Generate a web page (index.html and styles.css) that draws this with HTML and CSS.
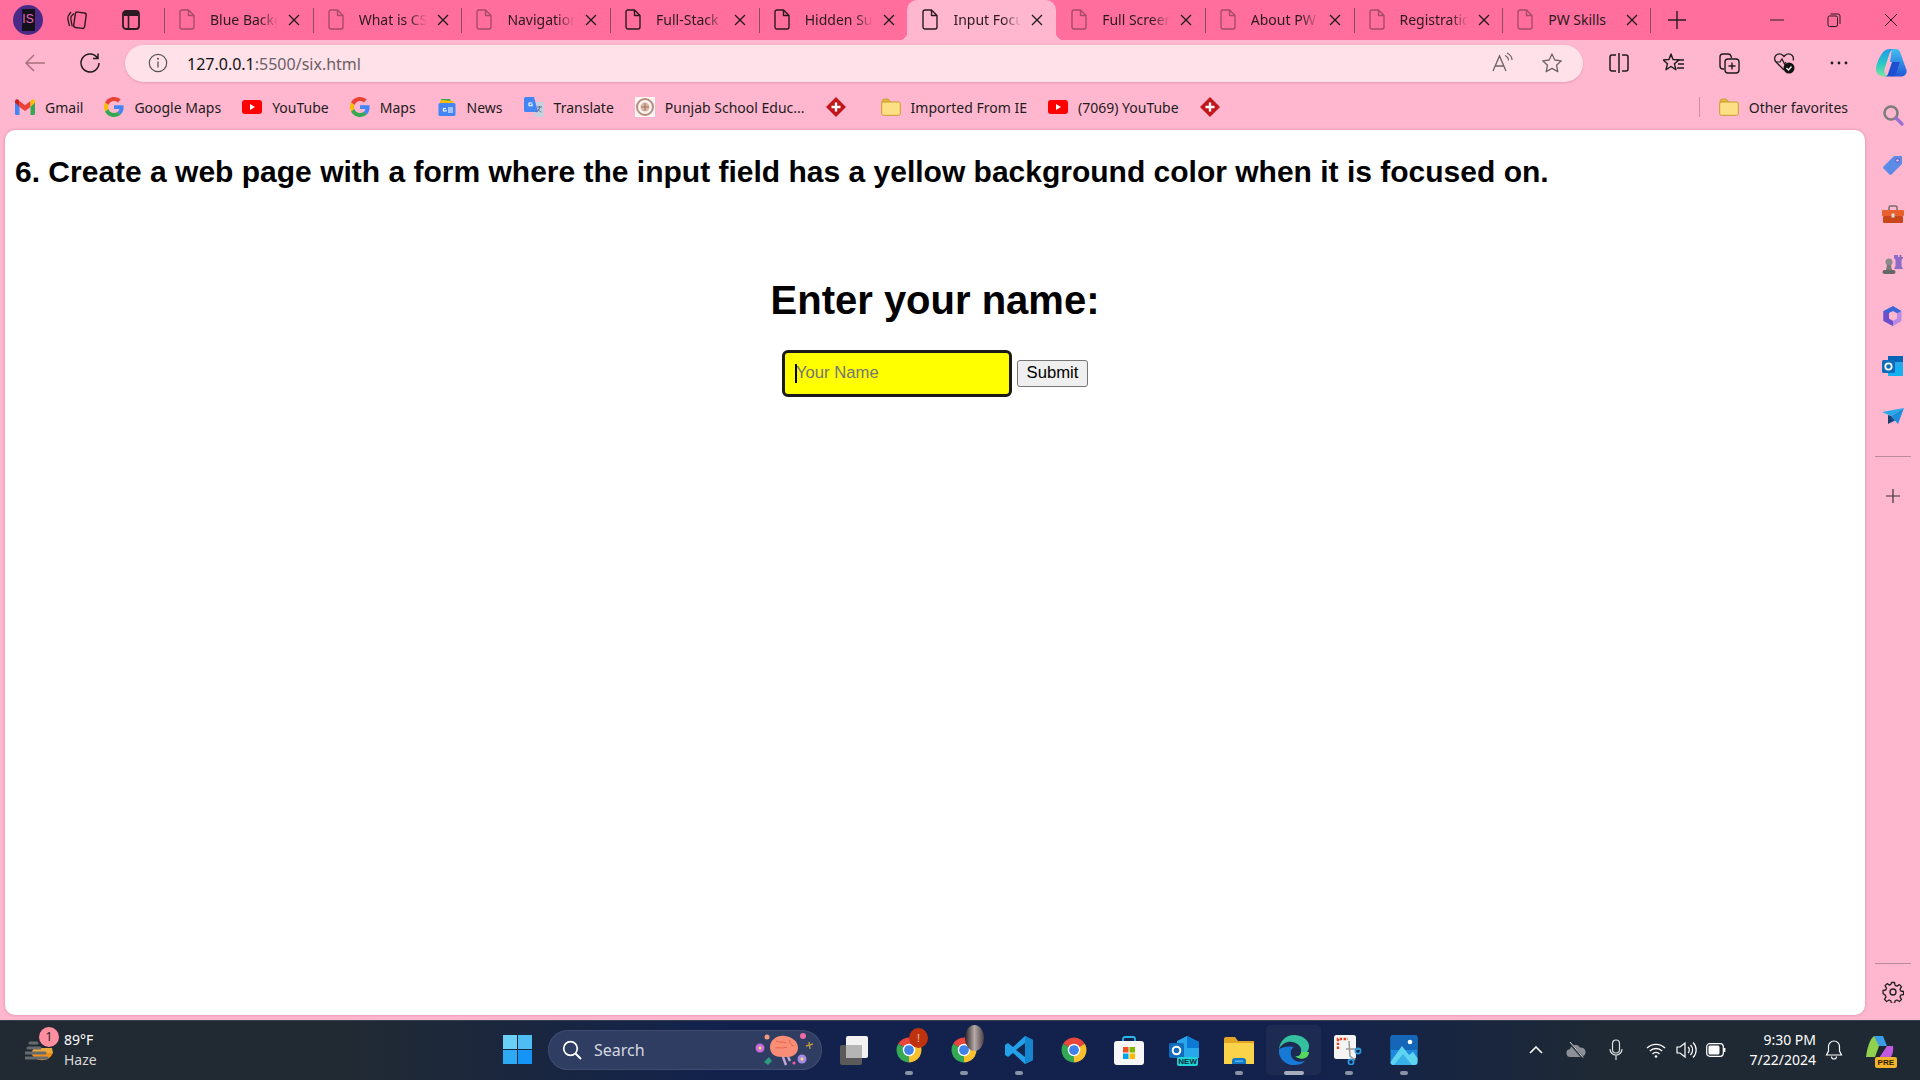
FILE: index.html
```html
<!DOCTYPE html>
<html lang="en">
<head>
  <meta charset="UTF-8">
  <meta name="viewport" content="width=device-width, initial-scale=1.0">
  <title>Input Focus</title>
  <link rel="stylesheet" href="styles.css">
</head>
<body>

<svg class="sprite" xmlns="http://www.w3.org/2000/svg">
  <defs>
    <linearGradient id="cp-left" x1="0" y1="0" x2="0" y2="1"><stop offset="0" stop-color="#1e9be8"/><stop offset="0.55" stop-color="#2cc9c4"/><stop offset="1" stop-color="#7be3a0"/></linearGradient>
    <linearGradient id="cp-right" x1="0" y1="0" x2="0" y2="1"><stop offset="0" stop-color="#3fc0ef"/><stop offset="1" stop-color="#2257d8"/></linearGradient>
  </defs>
  <symbol id="file" viewBox="0 0 16 21"><path d="M3 1h6.5L15 6.5V18a2 2 0 0 1-2 2H3a2 2 0 0 1-2-2V3a2 2 0 0 1 2-2zM9.500 1v5.500H15" fill="none" stroke="currentColor" stroke-width="1.400" stroke-linejoin="round"/></symbol>
  <symbol id="close" viewBox="0 0 12 12"><path d="M1 1l10 10M11 1L1 11" stroke="currentColor" stroke-width="1.300" fill="none"/></symbol>
  <symbol id="google" viewBox="0 0 48 48">
    <path fill="#EA4335" d="M24 9.500c3.540 0 6.710 1.220 9.210 3.600l6.850-6.850C35.900 2.380 30.470 0 24 0 14.620 0 6.510 5.380 2.560 13.220l7.980 6.190C12.430 13.720 17.740 9.500 24 9.500z"/>
    <path fill="#4285F4" d="M46.980 24.550c0-1.570-.15-3.090-.38-4.550H24v9.020h12.940c-.58 2.960-2.260 5.480-4.780 7.180l7.730 6c4.510-4.180 7.090-10.360 7.090-17.650z"/>
    <path fill="#FBBC05" d="M10.530 28.590c-.48-1.450-.76-2.990-.76-4.590s.27-3.140.76-4.590l-7.980-6.190C.92 16.460 0 20.120 0 24c0 3.880.92 7.540 2.560 10.780l7.970-6.190z"/>
    <path fill="#34A853" d="M24 48c6.480 0 11.930-2.130 15.890-5.810l-7.730-6c-2.150 1.450-4.920 2.300-8.160 2.300-6.260 0-11.570-4.220-13.470-9.910l-7.980 6.190C6.510 42.620 14.620 48 24 48z"/>
  </symbol>
  <symbol id="gmail" viewBox="0 0 20 16">
    <path fill="#4285F4" d="M0 3v11.500A1.500 1.500 0 0 0 1.500 16H4.500V7z"/>
    <path fill="#34A853" d="M20 3v11.500a1.500 1.500 0 0 1-1.500 1.500h-3V7z"/>
    <path fill="#EA4335" d="M4.500 8V2L10 6.200 15.500 2v6L10 12z"/>
    <path fill="#C5221F" d="M0 3.500V2.200C0 .6 1.800-.4 3.100.6L4.500 2v6z"/>
    <path fill="#FBBC04" d="M20 3.500V2.200C20 .6 18.200-.4 16.900.6L15.500 2v6z"/>
  </symbol>
  <symbol id="youtube" viewBox="0 0 20 14"><rect width="20" height="14" rx="3" fill="#f00"/><path d="M8 4l5 3-5 3z" fill="#fff"/></symbol>
  <symbol id="news" viewBox="0 0 18 20">
    <path fill="#34A853" d="M3 2h9l2 4H3z"/><path fill="#FBBC04" d="M2 5l1-2 12 1 1 3H2z"/>
    <rect x="0.500" y="6" width="17" height="13" rx="1.500" fill="#4285F4"/>
    <path d="M8 11.500H5.500v2.500H8v-1M10 11h5M10 13h5M10 15h5" stroke="#fff" stroke-width="1.200" fill="none"/>
  </symbol>
  <symbol id="translate" viewBox="0 0 20 20">
    <path fill="#c8d0e0" d="M8 5h10.500A1.500 1.500 0 0 1 20 6.500v12a1.500 1.500 0 0 1-1.500 1.500H11z"/>
    <path fill="#4285F4" d="M1.500 0H10l4 15H1.500A1.500 1.500 0 0 1 0 13.500v-12A1.500 1.500 0 0 1 1.500 0z"/>
    <path d="M8.500 6H5v2.800h3V7" stroke="#fff" stroke-width="1.100" fill="none"/>
    <path d="M13 10h5M15.500 9v1.500c0 2-1.500 4-3 4.500M14 12c.6 1.500 2 2.700 3.500 3" stroke="#5f6b85" stroke-width="1" fill="none"/>
  </symbol>
  <symbol id="crest" viewBox="0 0 20 20">
    <rect width="20" height="20" fill="#fdf6f2"/><circle cx="10" cy="10" r="8" fill="none" stroke="#b58d7e" stroke-width="2"/>
    <circle cx="10" cy="10" r="4.500" fill="#d8b9a8"/><path d="M6 10h8M10 6v8" stroke="#a66f5c"/>
  </symbol>
  <symbol id="diamond" viewBox="0 0 20 20">
    <path d="M10 0l10 10-10 10L0 10z" fill="#c2161b"/><path d="M10 5.500v9M5.500 10h9" stroke="#fff" stroke-width="2.400"/>
  </symbol>
  <symbol id="folder" viewBox="0 0 20 18">
    <path d="M1 3.500A2.500 2.500 0 0 1 3.500 1H7l2.500 2.500V5H1z" fill="#e3b63e" stroke="#c89b2a" stroke-width="0.800"/>
    <rect x="0.700" y="4" width="18.600" height="13.300" rx="1.800" fill="#fde086" stroke="#c89b2a"/>
  </symbol>
  <symbol id="chrome" viewBox="0 0 48 48">
    <path fill="#E8453C" d="M24 24L6.680 14A20 20 0 0 1 41.320 14z"/>
    <path fill="#34A853" d="M24 24V44A20 20 0 0 1 6.680 14z"/>
    <path fill="#FBC02D" d="M24 24L41.320 14A20 20 0 0 1 24 44z"/>
    <circle cx="24" cy="24" r="10" fill="#fff"/><circle cx="24" cy="24" r="7.800" fill="#3F83E8"/>
  </symbol>
  <symbol id="copilot" viewBox="0 0 32 28">
    <path fill="url(#cp-right)" d="M16 0h4c2 0 3.400 1 4 3l6.500 18c.7 3-1 6-5 6.500H16c2.500 0 4-2 4.800-4L24 13H14z"/>
    <path fill="url(#cp-left)" d="M14 0h3c-2 1-3 3-3.700 5L8.500 20c-.8 3 .5 6 3.500 7.500H8c-4.500 0-8-3-8-7 0-5 3-12 6-16 2-3 4.500-4.500 8-4.500z"/>
    <path fill="#1d4fd0" d="M9 27.500h8c2 0 3.500-2 4-4l3-10.500h-8l-4 12c-.5 1.500-1.500 2.500-3 2.500z"/>
  </symbol>
</svg>

<div class="tabstrip">
  <div class="avatar"><span class="avatar-plate">IS</span></div>
  <svg class="strip-icon workspaces" viewBox="0 0 22 22"><rect x="8.500" y="3.500" width="11" height="15.500" rx="2" transform="rotate(8 14 11)" fill="none" stroke="currentColor" stroke-width="1.400"/><path d="M8 4.500L5.500 7c-1 1-.8 2-.6 3.500l1.300 7M5 3L2.500 6.500C1.500 8 1.700 9 2 11l1.500 6" fill="none" stroke="currentColor" stroke-width="1.300"/></svg>
  <svg class="strip-icon vtabs" viewBox="0 0 18 20"><rect x="1" y="1" width="16" height="18" rx="3" fill="none" stroke="currentColor" stroke-width="1.800"/><path d="M2 2h14v4H2z" fill="currentColor"/><path d="M6.500 6v13" stroke="currentColor" stroke-width="1.600"/></svg>

  <div class="tabs">
    <div class="tab faded"><svg class="tab-icon"><use href="#file"/></svg><span class="tab-title">Blue Backg</span><svg class="tab-close"><use href="#close"/></svg></div>
    <div class="tab faded"><svg class="tab-icon"><use href="#file"/></svg><span class="tab-title">What is CS</span><svg class="tab-close"><use href="#close"/></svg></div>
    <div class="tab faded"><svg class="tab-icon"><use href="#file"/></svg><span class="tab-title">Navigation</span><svg class="tab-close"><use href="#close"/></svg></div>
    <div class="tab"><svg class="tab-icon"><use href="#file"/></svg><span class="tab-title">Full-Stack</span><svg class="tab-close"><use href="#close"/></svg></div>
    <div class="tab before-active"><svg class="tab-icon"><use href="#file"/></svg><span class="tab-title">Hidden Su</span><svg class="tab-close"><use href="#close"/></svg></div>
    <div class="tab active"><svg class="tab-icon"><use href="#file"/></svg><span class="tab-title">Input Focu</span><svg class="tab-close"><use href="#close"/></svg></div>
    <div class="tab faded after-active"><svg class="tab-icon"><use href="#file"/></svg><span class="tab-title">Full Screen</span><svg class="tab-close"><use href="#close"/></svg></div>
    <div class="tab faded"><svg class="tab-icon"><use href="#file"/></svg><span class="tab-title">About PW</span><svg class="tab-close"><use href="#close"/></svg></div>
    <div class="tab faded"><svg class="tab-icon"><use href="#file"/></svg><span class="tab-title">Registratio</span><svg class="tab-close"><use href="#close"/></svg></div>
    <div class="tab faded last"><svg class="tab-icon"><use href="#file"/></svg><span class="tab-title full">PW Skills</span><svg class="tab-close"><use href="#close"/></svg></div>
  </div>

  <svg class="strip-icon newtab" viewBox="0 0 18 18"><path d="M9 0v18M0 9h18" stroke="currentColor" stroke-width="1.400"/></svg>

  <div class="window-btns">
    <svg class="win-btn" viewBox="0 0 14 14"><path d="M0 7h14" stroke="currentColor" stroke-width="1"/></svg>
    <svg class="win-btn" viewBox="0 0 14 14"><rect x="1" y="3" width="9.500" height="10.500" rx="1.500" fill="none" stroke="currentColor"/><path d="M3.500 1h7.500A2 2 0 0 1 13 3v8" fill="none" stroke="currentColor"/></svg>
    <svg class="win-btn" viewBox="0 0 14 14"><path d="M1 1l12 12M13 1L1 13" stroke="currentColor" stroke-width="1"/></svg>
  </div>
</div>

<div class="toolbar">
  <svg class="tool-icon back" viewBox="0 0 22 20"><path d="M21 10H2M10 2l-8 8 8 8" fill="none" stroke="#a9707f" stroke-width="1.500"/></svg>
  <svg class="tool-icon reload" viewBox="0 0 22 22"><path d="M18.500 6A9 9 0 1 0 20 11M19 1.500V6.500H14" fill="none" stroke="#1c1c1c" stroke-width="1.500"/></svg>
  <div class="addressbar">
    <svg class="info-icon" viewBox="0 0 20 20"><circle cx="10" cy="10" r="8.700" fill="none" stroke="#555" stroke-width="1.200"/><path d="M10 8.500v6" stroke="#555" stroke-width="1.300"/><circle cx="10" cy="5.800" r="1" fill="#555"/></svg>
    <span class="url"><span class="url-host">127.0.0.1</span>:5500/six.html</span>
    <svg class="addr-icon readaloud" viewBox="0 0 22 22"><path d="M2 19L8.500 4 15 19M4.500 14h8" fill="none" stroke="#6d6268" stroke-width="1.300"/><path d="M14 3.500c2 1 3.500 3 3.500 5M16 1c3 1.500 5 4 5 7" fill="none" stroke="#6d6268" stroke-width="1.200"/></svg>
    <svg class="addr-icon star" viewBox="0 0 22 22"><path d="M11 2l2.800 6 6.500.8-4.800 4.400 1.300 6.400L11 16.400l-5.800 3.200 1.300-6.400L1.700 8.800 8.200 8z" fill="none" stroke="#6d6268" stroke-width="1.300" stroke-linejoin="round"/></svg>
  </div>
  <div class="tool-group">
    <svg class="tool-icon" viewBox="0 0 22 22"><path d="M8 3H4a2 2 0 0 0-2 2v12a2 2 0 0 0 2 2h4M14 3h4a2 2 0 0 1 2 2v12a2 2 0 0 1-2 2h-4M11 1v20" fill="none" stroke="#1c1c1c" stroke-width="1.500"/></svg>
    <svg class="tool-icon" viewBox="0 0 22 22"><path d="M8 2l2 5.500 6 .4-4.600 3.800 1.500 6L8 14.500 3 17.700l1.500-6L0 7.900l6-.4z" fill="none" stroke="#1c1c1c" stroke-width="1.400" stroke-linejoin="round"/><path d="M14 8h7M15 12h6M14 16h7" stroke="#1c1c1c" stroke-width="1.400"/></svg>
    <svg class="tool-icon" viewBox="0 0 22 22"><path d="M6 17H5a3 3 0 0 1-3-3V5a3 3 0 0 1 3-3h5a3 3 0 0 1 3 2l.5 2" fill="none" stroke="#1c1c1c" stroke-width="1.400"/><rect x="7" y="7" width="14" height="14" rx="3" fill="none" stroke="#1c1c1c" stroke-width="1.400"/><path d="M14 10.500v7M10.500 14h7" stroke="#1c1c1c" stroke-width="1.400"/></svg>
    <svg class="tool-icon" viewBox="0 0 22 22"><path d="M11 18L3 10a4.800 4.800 0 0 1 0-6.800 4.800 4.800 0 0 1 6.800 0L11 4.500l1.200-1.300a4.800 4.800 0 0 1 6.800 0 4.800 4.800 0 0 1 1 5.300" fill="none" stroke="#1c1c1c" stroke-width="1.300"/><path d="M3 10h4l2-3 2.500 5 1.500-2" fill="none" stroke="#1c1c1c" stroke-width="1.200"/><circle cx="16" cy="16" r="5.500" fill="#111"/><path d="M13.500 16l2 2 3-3.500" stroke="#fff" stroke-width="1.200" fill="none"/></svg>
    <svg class="tool-icon" viewBox="0 0 22 22"><circle cx="4" cy="11" r="1.400" fill="#1c1c1c"/><circle cx="11" cy="11" r="1.400" fill="#1c1c1c"/><circle cx="18" cy="11" r="1.400" fill="#1c1c1c"/></svg>
  </div>
  <svg class="copilot-top"><use href="#copilot"/></svg>
</div>

<div class="content">
  <div class="main">
    <div class="bookmarks">
      <div class="bookmark"><svg class="bm-icon"><use href="#gmail"/></svg>Gmail</div>
      <div class="bookmark"><svg class="bm-icon"><use href="#google"/></svg>Google Maps</div>
      <div class="bookmark"><svg class="bm-icon"><use href="#youtube"/></svg>YouTube</div>
      <div class="bookmark"><svg class="bm-icon"><use href="#google"/></svg>Maps</div>
      <div class="bookmark"><svg class="bm-icon"><use href="#news"/></svg>News</div>
      <div class="bookmark"><svg class="bm-icon"><use href="#translate"/></svg>Translate</div>
      <div class="bookmark"><svg class="bm-icon"><use href="#crest"/></svg>Punjab School Educ...</div>
      <div class="bookmark"><svg class="bm-icon"><use href="#diamond"/></svg></div>
      <div class="bookmark bm-folder"><svg class="bm-icon"><use href="#folder"/></svg>Imported From IE</div>
      <div class="bookmark"><svg class="bm-icon"><use href="#youtube"/></svg>(7069) YouTube</div>
      <div class="bookmark"><svg class="bm-icon"><use href="#diamond"/></svg></div>
      <div class="bookmark other"><svg class="bm-icon"><use href="#folder"/></svg>Other favorites</div>
    </div>

    <div class="page">
      <h2 class="question">6. Create a web page with a form where the input field has a yellow background color when it is focused on.</h2>
      <form class="name-form">
        <h1 class="form-title">Enter your name:</h1>
        <div class="form-row">
          <div class="input-wrap">
            <input class="name-input" type="text" placeholder="Your Name">
            <span class="caret"></span>
          </div>
          <button class="submit-btn" type="button">Submit</button>
        </div>
      </form>
    </div>
  </div>

  <div class="sidebar">
    <svg class="side-icon" viewBox="0 0 22 22"><circle cx="9" cy="9" r="6.500" fill="none" stroke="#7d7d80" stroke-width="2.600"/><path d="M14 14l6 6" stroke="#9b6fd0" stroke-width="3.200" stroke-linecap="round"/></svg>
    <svg class="side-icon" viewBox="0 0 22 22"><path d="M12 2h7a1 1 0 0 1 1 1v7L9.500 20.500a1.500 1.500 0 0 1-2 0L1.500 14.500a1.500 1.500 0 0 1 0-2z" fill="#5a8be6"/><circle cx="15.500" cy="6.500" r="1.800" fill="#d5c8ee" stroke="#6a4fb0"/></svg>
    <svg class="side-icon" viewBox="0 0 22 22"><path d="M7 6V3.500A1.500 1.500 0 0 1 8.500 2h5A1.500 1.500 0 0 1 15 3.500V6" fill="none" stroke="#7a6a6a" stroke-width="1.500"/><rect y="6" width="22" height="6" rx="1" fill="#e8602c"/><rect x="1" y="12" width="20" height="7" rx="1" fill="#c8461a"/><rect x="9.500" y="9.500" width="3" height="4" fill="#ddd"/></svg>
    <svg class="side-icon" viewBox="0 0 22 22"><path d="M14 1h2v2h1.500V1h2v2H21v1l-1.500 2v6l1.500 3H12l1.500-3V6L12 4V1z" fill="#8d6cc8"/><circle cx="7" cy="8" r="3.500" fill="#8a8a8a"/><path d="M5 11h4l1 5H4z" fill="#7a7a7a"/><rect x="0.500" y="16" width="13" height="4" rx="2" fill="#666"/></svg>
    <svg class="side-icon" viewBox="0 0 22 22"><path d="M11 1l8.500 5-4 2.500-4.500-2.500-4 2v5L1.500 16V6z" fill="#3a66d8"/><path d="M19.500 6v10L11 21l-4-2.500 4-2.500 4-2.500V8.500z" fill="#b78ae8"/><path d="M1.500 6v10L7 19l4 2V16l-4-2.500v-5z" fill="#6e4ec9"/></svg>
    <svg class="side-icon" viewBox="0 0 22 22"><rect x="6" y="1" width="15" height="20" rx="1.500" fill="#28a8ea"/><rect x="6" y="1" width="15" height="6" fill="#0364b8"/><path d="M6 11h15v10H7.500A1.500 1.500 0 0 1 6 19.500z" fill="#14b0f0"/><rect y="5" width="13" height="13" rx="1.500" fill="#0f6cbd"/><circle cx="6.500" cy="11.500" r="3.200" fill="none" stroke="#fff" stroke-width="1.700"/></svg>
    <svg class="side-icon" viewBox="0 0 22 22"><path d="M0 7l22-4-13 8z" fill="#29a9eb"/><path d="M22 3L16 19l-7-8z" fill="#1c8fdc"/><path d="M6 10l3 1 .5 6-3.500 2z" fill="#1a3e70"/><path d="M9 11l4 4.500-4 2z" fill="#0f4a94"/></svg>
    <div class="side-rule"></div>
    <svg class="side-plus" viewBox="0 0 14 14"><path d="M7 0v14M0 7h14" stroke="#333" stroke-width="1.200"/></svg>
    <div class="side-rule bottom"></div>
    <svg class="side-gear" viewBox="0 0 22 22"><circle cx="11" cy="11" r="3" fill="none" stroke="#222" stroke-width="1.400"/><path d="M9.500 1.500h3l.6 2.800 1.800.8 2.500-1.500 2.100 2.100-1.500 2.500.8 1.800 2.700.5v3l-2.700.6-.8 1.800 1.500 2.500-2.100 2.100-2.500-1.500-1.800.8-.6 2.700h-3l-.6-2.700-1.800-.8-2.500 1.500-2.100-2.100 1.500-2.500-.8-1.800L1 12.500v-3l2.700-.5.800-1.800L3 4.700l2.100-2.100 2.500 1.500 1.300-.8z" fill="none" stroke="#222" stroke-width="1.300" stroke-linejoin="round"/></svg>
  </div>
</div>

<div class="taskbar">
  <div class="weather">
    <div class="weather-icon">
      <svg viewBox="0 0 30 26" width="30" height="26"><path d="M6 13h22a12 12 0 0 1-22 0z" fill="#ee8f1c"/><path d="M9 8h18l1 5H6z" fill="#e9a83a"/><path d="M5 3h7M3 8h12M0 13h20M0 18h22" stroke="#666b70" stroke-width="3" stroke-linecap="round"/></svg>
      <span class="weather-badge">1</span>
    </div>
    <div class="weather-text"><span>89°F</span><span class="weather-sub">Haze</span></div>
  </div>

  <svg class="start" viewBox="0 0 29 29"><rect width="14" height="14" fill="#6bd0f5"/><rect x="15" width="14" height="14" fill="#4dbdf3"/><rect y="15" width="14" height="14" fill="#2eaaf5"/><rect x="15" y="15" width="14" height="14" fill="#1495f5"/></svg>

  <div class="search">
    <svg class="search-icon" viewBox="0 0 20 20"><circle cx="8.500" cy="8.500" r="6.800" fill="none" stroke="#fff" stroke-width="1.700"/><path d="M13.500 13.500L19 19" stroke="#fff" stroke-width="1.900"/></svg>
    <span class="search-text">Search</span>
    <svg class="search-art" viewBox="0 0 60 36"><path d="M16 15c0-7 7-12 15-11s13 6 13 12-6 9-10 9h-6c-7 0-12-3-12-10z" fill="#f98d76"/><path d="M29 25l3 8M34 25l2 4" stroke="#c5a8d8" stroke-width="2.400"/><path d="M22 9c3 2 7 0 10 2M21 16c4-1 8 1 12-1M36 8c-1 3 1 5 4 6" stroke="#e5654f" fill="none"/><circle cx="6" cy="16" r="4.500" fill="#c76bd8"/><circle cx="6" cy="16" r="1.500" fill="#f5e16b"/><circle cx="48" cy="27" r="4.500" fill="#a78ae8"/><circle cx="48" cy="27" r="1.500" fill="#f5e16b"/><path d="M10 30l5-5 3 4-4 4z" fill="#2f9a80"/><circle cx="13" cy="5" r="2.500" fill="#ef9a80"/><circle cx="49" cy="4" r="3" fill="#f06aa8"/><path d="M52 14l7-2M55 10l1 7" stroke="#b99a3d" stroke-width="1.400"/><circle cx="40" cy="31" r="1.600" fill="#ee5aa0"/></svg>
  </div>

  <div class="task-icons">
    <div class="task-slot">
      <svg class="task-icon" viewBox="0 0 30 30"><rect x="1" y="10" width="22" height="20" rx="2" fill="#5a5a5a"/><rect x="7" y="1" width="22" height="22" rx="2" fill="#f2f2f2"/><rect x="7" y="10" width="16" height="13" fill="#b5b5b5"/></svg>
    </div>
    <div class="task-slot dot">
      <svg class="task-icon"><use href="#chrome"/></svg>
      <span class="task-badge">!</span>
    </div>
    <div class="task-slot dot">
      <svg class="task-icon"><use href="#chrome"/></svg>
      <span class="task-avatar"></span>
    </div>
    <div class="task-slot dot">
      <svg class="task-icon" viewBox="0 0 30 30"><path d="M21 1l8 4v20l-8 4L9 18l-5 4-3-2V10l3-2 5 4z" fill="#23a0e8"/><path d="M21 8v14l-9-7z" fill="#12284f"/><path d="M21 1l8 4v20l-8 4z" fill="#1585d0"/></svg>
    </div>
    <div class="task-slot">
      <svg class="task-icon"><use href="#chrome"/></svg>
    </div>
    <div class="task-slot">
      <svg class="task-icon" viewBox="0 0 30 30"><path d="M9 7V4a2 2 0 0 1 2-2h8a2 2 0 0 1 2 2v3" fill="none" stroke="#29b6e8" stroke-width="1.800"/><rect y="6" width="30" height="24" rx="3" fill="#f7f7f7"/><rect x="9" y="12" width="5.500" height="5.500" fill="#f25022"/><rect x="15.500" y="12" width="5.500" height="5.500" fill="#7fba00"/><rect x="9" y="18.500" width="5.500" height="5.500" fill="#00a4ef"/><rect x="15.500" y="18.500" width="5.500" height="5.500" fill="#ffb900"/></svg>
    </div>
    <div class="task-slot">
      <svg class="task-icon" viewBox="0 0 30 30"><path d="M8 6l10-5 12 6v16H8z" fill="#28a8ea"/><path d="M18 1l12 6v6H18z" fill="#0a78d4"/><rect y="8" width="15" height="15" rx="2" fill="#0f6cbd"/><circle cx="7.500" cy="15.500" r="3.800" fill="none" stroke="#fff" stroke-width="2"/></svg>
      <span class="new-tag">NEW</span>
    </div>
    <div class="task-slot dot">
      <svg class="task-icon" viewBox="0 0 30 30"><path d="M0 4a2 2 0 0 1 2-2h9l3 4h16v4H0z" fill="#e2a526"/><rect y="8" width="30" height="21" fill="#fbd34b"/><path d="M8 29v-3a3 3 0 0 1 3-3h8a3 3 0 0 1 3 3v3z" fill="#1378c7"/><rect x="11" y="25.500" width="8" height="1.500" fill="#5ab4ee"/></svg>
    </div>
    <div class="task-slot active-slot">
      <svg class="task-icon" viewBox="0 0 30 30"><path d="M15 0C7 0 1 6 0 14c3-6 9-8 13-7 7 1 10 6 9 10h6c2-2 2-5 2-7C29 4 22 0 15 0z" fill="#35c1a0"/><path d="M0 14c-1 9 6 16 15 16 5 0 8-1 11-4-6 2-13 0-14-6-1-4 1-7 3-8-6-1-11 0-15 2z" fill="#1679d6"/><path d="M22 17c0 3-3 5-6 4 3 3 8 4 12 1 1-1 2-3 2-5z" fill="#55d65f"/></svg>
    </div>
    <div class="task-slot dot">
      <svg class="task-icon" viewBox="0 0 30 30"><rect x="0" y="0" width="22" height="24" rx="2.500" fill="#f4f4f4"/><path d="M4 14V4h10" fill="none" stroke="#e0421a" stroke-width="2.400" stroke-dasharray="2.400 1.500"/><path d="M15 6l1 15 5 4M12 14l14 0" stroke="#9a9a9a" stroke-width="1.500" fill="none"/><circle cx="24" cy="16" r="2.600" fill="none" stroke="#2a9be0" stroke-width="1.700"/><circle cx="17" cy="27" r="2.600" fill="none" stroke="#2a9be0" stroke-width="1.700"/></svg>
    </div>
    <div class="task-slot dot">
      <svg class="task-icon" viewBox="0 0 30 30"><rect width="27" height="30" x="1.500" rx="3" fill="#1d8ae0"/><rect width="27" height="15" x="1.500" rx="3" fill="#1565b8"/><circle cx="21" cy="7" r="2.300" fill="#fff"/><path d="M1.500 27L13 11l7 9 4-3 4.500 6v4a3 3 0 0 1-3 3h-21a3 3 0 0 1-3-3z" fill="#5fd4f0"/><path d="M5 30l9-11 9 11z" fill="#39b0e8"/></svg>
    </div>
  </div>

  <div class="tray">
    <svg class="tray-icon chevron" viewBox="0 0 14 8"><path d="M1 7l6-6 6 6" fill="none" stroke="#fff" stroke-width="1.600"/></svg>
    <svg class="tray-icon cloud" viewBox="0 0 20 16"><path d="M5 15a4 4 0 0 1-1-8 5.500 5.500 0 0 1 10-1.500A4.500 4.500 0 0 1 15.500 15z" fill="#8c9096"/><path d="M3 0l14 16" stroke="#1f2933" stroke-width="2.400"/><path d="M4 0l13 15.500" stroke="#e5e5e5" stroke-width="1"/></svg>
    <svg class="tray-icon mic" viewBox="0 0 14 22"><rect x="3.500" y="1" width="7" height="13" rx="3.500" fill="none" stroke="#ddd" stroke-width="1.200"/><path d="M1 10a6 6 0 0 0 12 0M7 16v5" fill="none" stroke="#ddd" stroke-width="1.200"/></svg>
    <svg class="tray-icon wifi" viewBox="0 0 20 16"><path d="M1 6a13 13 0 0 1 18 0M3.800 9a9 9 0 0 1 12.400 0M6.500 12a5 5 0 0 1 7 0" fill="none" stroke="#fff" stroke-width="1.400"/><circle cx="10" cy="14.500" r="1.300" fill="#fff"/></svg>
    <svg class="tray-icon volume" viewBox="0 0 21 18"><path d="M1 6v6h3l5 4V2L4 6z" fill="none" stroke="#fff" stroke-width="1.200"/><path d="M12 6a4 4 0 0 1 0 6M14.500 4a7 7 0 0 1 0 10M17 1.500a10.500 10.500 0 0 1 0 15" fill="none" stroke="#fff" stroke-width="1.200"/></svg>
    <svg class="tray-icon battery" viewBox="0 0 20 14"><rect x="0.700" y="0.700" width="16.600" height="12.600" rx="3" fill="none" stroke="#fff" stroke-width="1.200"/><rect x="2.500" y="2.500" width="11" height="9" rx="1.500" fill="#fff"/><path d="M18.500 5v4" stroke="#fff" stroke-width="1.800"/></svg>
    <div class="clock"><span>9:30 PM</span><span>7/22/2024</span></div>
    <svg class="tray-icon bell" viewBox="0 0 18 20"><path d="M9 1a5.500 5.500 0 0 0-5.500 5.500V11L1.500 15h15l-2-4V6.500A5.500 5.500 0 0 0 9 1zM6.500 16.500a2.500 2.500 0 0 0 5 0" fill="none" stroke="#fff" stroke-width="1.200"/></svg>
    <div class="copilot-pre">
      <svg class="copilot-pre-icon" viewBox="0 0 30 28"><path d="M9 1h9l4 10H12z" fill="#3a9ce6"/><path d="M9 1C5 4 2 13 1 22h9l4-11z" fill="#8fd14f"/><path d="M22 11h6c1 5-1 14-8 15H8c2 0 5-1 6-3z" fill="#c05be0"/></svg>
      <span class="pre-tag">PRE</span>
    </div>
  </div>
</div>

</body>
</html>
```

FILE: styles.css
```css
* {
  box-sizing: border-box;
}
html, body {
  margin: 0;
  height: 100%;
}
body {
  width: 1920px;
  height: 1080px;
  overflow: hidden;
  display: flex;
  flex-direction: column;
  font-family: "Noto Sans", "Liberation Sans", sans-serif;
  background-color: #ffb6cf;
  color: #1c1c1c;
}
.sprite {
  position: absolute;
  width: 0;
  height: 0;
}

/* tab strip */
.tabstrip {
  height: 40px;
  flex: none;
  display: flex;
  align-items: center;
  padding-left: 13px;
  background-color: #ff6e9c;
}
.avatar {
  width: 30px;
  height: 30px;
  flex: none;
  display: flex;
  align-items: center;
  justify-content: center;
  border-radius: 50%;
  background-color: #4b2a87;
}
.avatar-plate {
  width: 13px;
  height: 22px;
  background-color: #14101c;
  color: #f06ac0;
  font-family: "Liberation Sans", sans-serif;
  font-size: 12px;
  line-height: 20px;
  text-align: center;
}
.strip-icon {
  flex: none;
  color: #2b1a22;
}
.workspaces {
  width: 22px;
  height: 22px;
  margin-left: 23px;
}
.vtabs {
  width: 18px;
  height: 20px;
  margin-left: 34px;
}
.tabs {
  display: flex;
  height: 40px;
  margin-left: 24px;
}
.tab {
  width: 148.700px;
  height: 40px;
  display: grid;
  grid-template-columns: 16px 68px 12px;
  align-items: center;
  padding: 0 0 1px 15px;
  position: relative;
  font-size: 14px;
  color: #2a1a20;
}
.tab::before {
  content: "";
  position: absolute;
  left: 0;
  top: 8px;
  height: 25px;
  width: 1px;
  background-color: #8a4a60;
}
.tab.before-active::after {
  content: "";
  position: absolute;
  right: 0;
  bottom: 0;
  width: 8px;
  height: 8px;
  background: radial-gradient(circle at 0 0, #ff6e9c 8px, #ffb6cf 8.500px);
}
.tab.after-active::after {
  content: "";
  position: absolute;
  left: 0;
  bottom: 0;
  width: 8px;
  height: 8px;
  background: radial-gradient(circle at 100% 0, #ff6e9c 8px, #ffb6cf 8.500px);
}
.tab.last::after {
  content: "";
  position: absolute;
  right: 0;
  top: 8px;
  height: 25px;
  width: 1px;
  background-color: #8a4a60;
}
.tab.active {
  background-color: #ffb6cf;
  border-radius: 10px 10px 0 0;
}
.tab.active::before,
.tab.after-active::before {
  display: none;
}
.tab-icon {
  width: 16px;
  height: 21px;
  color: #2a1a20;
}
.tab.faded .tab-icon {
  color: #a84a6c;
}
.tab-title {
  width: max-content;
  margin-left: 15px;
  white-space: nowrap;
  line-height: 18px;
  -webkit-mask-image: linear-gradient(to right, #000 50px, transparent 68px);
  mask-image: linear-gradient(to right, #000 50px, transparent 68px);
}
.tab-title.full {
  -webkit-mask-image: none;
  mask-image: none;
}
.tab-close {
  width: 12px;
  height: 12px;
  margin-left: 25px;
  color: #1c1c1c;
}
.newtab {
  width: 18px;
  height: 18px;
  margin-left: 17px;
  color: #2b1a22;
}
.window-btns {
  margin-left: auto;
  display: flex;
  align-items: center;
  gap: 43px;
  padding-right: 22px;
  color: #2b1a22;
}
.win-btn {
  width: 14px;
  height: 14px;
}

/* toolbar */
.toolbar {
  height: 46px;
  flex: none;
  display: flex;
  align-items: center;
  padding: 0 12px 0 24px;
}
.tool-icon {
  width: 22px;
  height: 22px;
  flex: none;
}
.reload {
  margin-left: 33px;
}
.addressbar {
  width: 1460px;
  height: 37px;
  margin-left: 24px;
  display: flex;
  align-items: center;
  padding-left: 23px;
  border-radius: 19px;
  background-color: #ffe1ea;
  box-shadow: 0 1px 2px rgba(160, 80, 110, 0.25);
}
.info-icon {
  width: 20px;
  height: 20px;
  flex: none;
}
.url {
  margin-left: 19px;
  padding-top: 1px;
  font-size: 16px;
  color: #6b5f64;
}
.url-host {
  color: #111;
}
.addr-icon {
  width: 22px;
  height: 22px;
  flex: none;
}
.readaloud {
  margin-left: auto;
  margin-right: 1px;
}
.star {
  margin-left: 27px;
  margin-right: 20px;
}
.tool-group {
  display: flex;
  gap: 33px;
  margin-left: 25px;
}
.copilot-top {
  width: 32px;
  height: 28px;
  flex: none;
  margin-left: 26px;
}

/* bookmarks + page */
.content {
  flex: 1;
  display: flex;
  min-height: 0;
}
.main {
  width: 1866px;
  display: flex;
  flex-direction: column;
}
.bookmarks {
  height: 44px;
  flex: none;
  display: flex;
  align-items: center;
  gap: 21px;
  padding: 0 0 2px 15px;
  font-size: 14px;
}
.bookmark {
  display: flex;
  align-items: center;
  gap: 10px;
  white-space: nowrap;
}
.bm-icon {
  width: 20px;
  height: 20px;
  flex: none;
}
.bm-folder {
  margin-left: 14px;
}
.other {
  margin-left: auto;
  margin-right: 18px;
  padding-left: 19px;
  border-left: 1px solid #d48aa5;
}
.page {
  flex: 1;
  margin: 0 1px 5px 5px;
  background-color: #fff;
  border-radius: 10px;
  box-shadow: 0 0 3px rgba(120, 60, 80, 0.35);
  padding: 1px 10px;
  font-family: "Liberation Sans", Arial, sans-serif;
  color: #000;
}
.question {
  margin: 24px 0 0;
  font-size: 30px;
  line-height: 34px;
  font-weight: bold;
}
.name-form {
  text-align: center;
}
.form-title {
  margin: 88px 0 0;
  font-size: 40px;
  line-height: 46px;
  font-weight: bold;
}
.form-row {
  margin-top: 27px;
  display: flex;
  justify-content: center;
  align-items: center;
  gap: 5px;
}
.input-wrap {
  position: relative;
  display: flex;
}
.name-input {
  width: 230px;
  height: 47px;
  padding: 0 0 2px 11px;
  border: 3px solid #1a1a1a;
  border-radius: 6px;
  background-color: #ff0;
  outline: none;
  font-family: inherit;
  font-size: 16.670px;
}
.name-input::placeholder {
  color: #757575;
}
.caret {
  position: absolute;
  left: 13px;
  top: 14px;
  width: 2px;
  height: 19px;
  background-color: #000;
}
.submit-btn {
  width: 71px;
  height: 27px;
  padding: 0 0 2px;
  border: 1px solid #767676;
  border-radius: 3px;
  background-color: #efefef;
  color: #000;
  font-family: inherit;
  font-size: 16.670px;
}

/* edge sidebar */
.sidebar {
  width: 54px;
  display: flex;
  flex-direction: column;
  align-items: center;
  padding: 17.500px 0 17px;
  gap: 28.300px;
}
.side-icon {
  width: 22px;
  height: 22px;
  flex: none;
}
.side-rule {
  width: 36px;
  height: 1px;
  flex: none;
  background-color: #b78a9c;
  margin-bottom: 4px;
}
.side-rule.bottom {
  margin-top: auto;
  margin-bottom: 0;
}
.side-plus {
  width: 14px;
  height: 14px;
  flex: none;
}
.side-gear {
  width: 22px;
  height: 22px;
  flex: none;
  margin-top: -11px;
}

/* taskbar */
.taskbar {
  height: 60px;
  flex: none;
  display: flex;
  align-items: center;
  padding: 0 0 2px 25px;
  border-top: 1px solid #3a3f4c;
  background: linear-gradient(to right, #212a33 0, #212a33 18%, #12224d 38%, #12224d 68%, #1f2933 84%, #1f2933 100%);
  color: #fff;
}
.weather {
  width: 478px;
  flex: none;
  display: flex;
  align-items: center;
  font-size: 14px;
}
.weather-icon {
  width: 30px;
  height: 26px;
  position: relative;
  margin-top: 6px;
}
.weather-badge {
  position: absolute;
  right: -4px;
  top: -13px;
  width: 20px;
  height: 20px;
  border-radius: 50%;
  background-color: #ff8f9f;
  color: #222;
  font-size: 12px;
  line-height: 20px;
  text-align: center;
}
.weather-text {
  display: flex;
  flex-direction: column;
  margin-left: 9px;
  line-height: 20px;
}
.weather-sub {
  color: #d8d8d8;
}
.start {
  width: 29px;
  height: 29px;
  flex: none;
}
.search {
  width: 274px;
  height: 40px;
  margin-left: 16px;
  flex: none;
  display: flex;
  align-items: center;
  padding-left: 14px;
  border-radius: 20px;
  background-color: #2f3d62;
  box-shadow: inset 0 0 0 1px #3f4c70;
}
.search-icon {
  width: 20px;
  height: 20px;
  flex: none;
}
.search-text {
  margin-left: 12px;
  font-size: 16px;
  color: #d5d8e0;
}
.search-art {
  width: 60px;
  height: 36px;
  margin-left: auto;
  margin-right: 8px;
}
.task-icons {
  display: flex;
  margin-left: 4px;
}
.task-slot {
  width: 55px;
  height: 50px;
  flex: none;
  display: flex;
  align-items: center;
  justify-content: center;
  position: relative;
}
.task-icon {
  width: 30px;
  height: 30px;
}
.task-slot.dot::after,
.active-slot::after {
  content: "";
  position: absolute;
  left: 50%;
  bottom: 0;
  width: 8px;
  height: 4px;
  margin-left: -4px;
  border-radius: 2px;
  background-color: #8a93a5;
}
.active-slot {
  border-radius: 5px;
  background-color: #1d2b52;
}
.active-slot::after {
  width: 20px;
  margin-left: -10px;
  background-color: #a6adbd;
}
.task-badge {
  position: absolute;
  right: 8px;
  top: 3px;
  width: 19px;
  height: 20px;
  border-radius: 50%;
  background-color: #c0320e;
  color: #f3c3b0;
  font-size: 11px;
  line-height: 20px;
  text-align: center;
}
.task-avatar {
  position: absolute;
  right: 7px;
  top: 0;
  width: 19px;
  height: 26px;
  border-radius: 50%;
  background: linear-gradient(to right, #2a2226, #b6a9a8 50%, #4b4044);
}
.new-tag {
  position: absolute;
  right: 13px;
  bottom: 9px;
  padding: 0 1px;
  border-radius: 2px;
  background-color: #1fd3d8;
  color: #0a2a3a;
  font-family: "Liberation Sans", sans-serif;
  font-size: 8px;
  line-height: 9px;
  font-weight: bold;
}
.tray {
  flex: 1;
  display: flex;
  align-items: center;
  padding-left: 98px;
  font-size: 14px;
}
.tray-icon {
  flex: none;
}
.chevron {
  width: 14px;
  height: 8px;
}
.cloud {
  width: 20px;
  height: 16px;
  margin-left: 23px;
}
.mic {
  width: 14px;
  height: 22px;
  margin-left: 23px;
}
.wifi {
  width: 20px;
  height: 16px;
  margin-left: 23px;
}
.volume {
  width: 21px;
  height: 18px;
  margin-left: 10px;
}
.battery {
  width: 20px;
  height: 14px;
  margin-left: 9px;
}
.clock {
  width: 76px;
  margin-left: 14px;
  display: flex;
  flex-direction: column;
  align-items: flex-end;
  line-height: 20px;
}
.bell {
  width: 18px;
  height: 20px;
  margin-left: 9px;
}
.copilot-pre {
  width: 30px;
  height: 30px;
  margin-left: 22px;
  position: relative;
}
.copilot-pre-icon {
  width: 30px;
  height: 28px;
}
.pre-tag {
  position: absolute;
  right: -2px;
  bottom: -3px;
  padding: 0 3px;
  border-radius: 2px;
  background-color: #f5b52a;
  color: #2a1a00;
  font-family: "Liberation Sans", sans-serif;
  font-size: 8px;
  line-height: 11px;
  font-weight: bold;
}
```
